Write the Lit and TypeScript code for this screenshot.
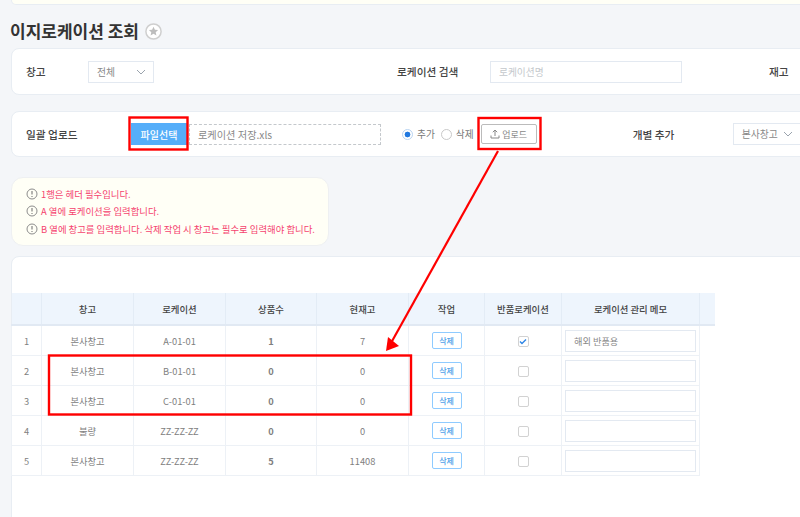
import { LitElement, html, css, svg } from 'lit';
import { customElement } from 'lit/decorators.js';

const rows = [
  { no: 1, wh: '본사창고', loc: 'A-01-01', count: 1, stock: 7, ret: true, memo: '해외 반품용' },
  { no: 2, wh: '본사창고', loc: 'B-01-01', count: 0, stock: 0, ret: false, memo: '' },
  { no: 3, wh: '본사창고', loc: 'C-01-01', count: 0, stock: 0, ret: false, memo: '' },
  { no: 4, wh: '불량', loc: 'ZZ-ZZ-ZZ', count: 0, stock: 0, ret: false, memo: '' },
  { no: 5, wh: '본사창고', loc: 'ZZ-ZZ-ZZ', count: 5, stock: 11408, ret: false, memo: '' },
];

const notices = [
  '1행은 헤더 필수입니다.',
  'A 열에 로케이션을 입력합니다.',
  'B 열에 창고를 입력합니다. 삭제 작업 시 창고는 필수로 입력해야 합니다.',
];

const chevron = html`<svg class="chev" width="10" height="6" viewBox="0 0 10 6"><path d="M1 1l4 4 4-4" fill="none" stroke="#9aa3ad" stroke-width="1"/></svg>`;

const noticeIcon = html`<svg class="notice-icon" width="12" height="12" viewBox="0 0 12 12">
  <circle cx="6" cy="6" r="5" fill="none" stroke="#8c8c8c" stroke-width="1"/>
  <path d="M6 3v3.6M6 8v1.1" stroke="#777" stroke-width="1.1" fill="none"/>
</svg>`;

const overlay = svg`
  <rect x="129.5" y="117.5" width="58" height="32" fill="none" stroke="#f00" stroke-width="2.4"/>
  <rect x="478.5" y="118" width="62" height="31" fill="none" stroke="#f00" stroke-width="2.4"/>
  <rect x="49" y="355.5" width="362" height="59" fill="none" stroke="#f00" stroke-width="2.4"/>
  <path d="M498 151L391 343" fill="none" stroke="#f00" stroke-width="2.2"/>
  <polygon points="386,351 388,337 399,346" fill="#f00"/>
`;

@customElement('app-root')
export class AppRoot extends LitElement {
  static styles = css`
    :host {
      display: block;
      position: relative;
      width: 800px;
      height: 517px;
      overflow: hidden;
      background: #f4f6f9;
      font-family: 'Noto Sans CJK KR', 'Noto Sans', sans-serif;
      font-size: 10px;
      color: #444;
    }

    .page {
      display: flex;
      flex-direction: column;
      width: 830px;
      padding-left: 11px;
      box-sizing: border-box;
    }

    .top-card {
      height: 5px;
      background: #fffff6;
      border: 1px solid #e8edf3;
      border-top: 0;
      border-radius: 0 0 8px 8px;
      box-sizing: border-box;
    }

    .title {
      display: flex;
      align-items: center;
      gap: 6px;
      height: 44px;
      margin-top: -1px;
      padding-top: 9px;
      box-sizing: border-box;
      font-size: 17px;
      font-weight: 700;
      color: #333;
      line-height: 1;
      margin-left: -1px;
    }

    .star {
      margin-top: 2px;
    }

    .card {
      display: flex;
      align-items: center;
      background: #fff;
      border: 1px solid #e8edf3;
      border-radius: 8px;
      box-sizing: border-box;
      padding-left: 14px;
    }

    .filter {
      height: 47px;
    }

    .upload {
      height: 46px;
      margin-top: 16px;
    }

    .label {
      font-weight: 500;
      color: #444;
      font-size: 10.7px;
      white-space: nowrap;
    }

    .select {
      display: flex;
      align-items: center;
      justify-content: space-between;
      height: 22px;
      box-sizing: border-box;
      padding: 0 7px 0 8px;
      border: 1px solid #e3e9f1;
      color: #888;
      font-size: 9.8px;
      background: #fff;
    }

    .field {
      height: 22px;
      width: 192px;
      box-sizing: border-box;
      padding-left: 8px;
      border: 1px solid #e3e9f1;
      color: #c4c8cc;
      font-size: 9.7px;
      display: flex;
      align-items: center;
    }

    .pick {
      width: 56px;
      height: 22px;
      background: #55aef9;
      color: #fff;
      font-weight: 500;
      font-size: 10px;
      display: flex;
      align-items: center;
      justify-content: center;
    }

    .file {
      width: 192px;
      height: 21px;
      margin-left: 2px;
      box-sizing: border-box;
      padding-left: 8px;
      border: 1px dashed #c4c8cc;
      display: flex;
      align-items: center;
      color: #888;
      font-size: 10.2px;
    }

    .radio {
      display: flex;
      align-items: center;
      color: #777;
      font-size: 9.7px;
    }

    .radio i {
      display: block;
      width: 11px;
      height: 11px;
      box-sizing: border-box;
      border: 1px solid #c9c9c9;
      border-radius: 50%;
      margin-right: 4px;
      background: #fff;
    }

    .radio i.on {
      border-color: #b9d4f2;
      background: radial-gradient(circle, #1f78e0 0 2.6px, #fff 3.2px);
    }

    .up-btn {
      width: 56px;
      height: 20px;
      box-sizing: border-box;
      border: 1px solid #bbb;
      border-radius: 2px;
      display: flex;
      align-items: center;
      justify-content: center;
      gap: 2px;
      color: #888;
      font-size: 9px;
    }

    .notice {
      width: 318px;
      height: 69px;
      margin-top: 20px;
      box-sizing: border-box;
      background: #fffff6;
      border: 1px solid #eef0f2;
      border-radius: 12px;
      padding: 7px 0 0 14px;
      display: flex;
      flex-direction: column;
    }

    .notice div {
      display: flex;
      align-items: center;
      gap: 3px;
      height: 17.5px;
      color: #f5436f;
      font-size: 9.4px;
      white-space: nowrap;
    }

    .list-card {
      margin-top: 10px;
      height: 300px;
      background: #fff;
      border: 1px solid #e8edf3;
      border-radius: 8px 0 0 0;
      box-sizing: border-box;
      padding-top: 36px;
    }

    table {
      border-collapse: collapse;
      table-layout: fixed;
      width: 703px;
      margin-left: -1px;
    }

    th {
      height: 31px;
      padding: 0;
      background: #eef5fd;
      border-right: 1px solid #e3ecf6;
      border-bottom: 2px solid #e1e9f3;
      font-weight: 500;
      font-size: 9.4px;
      color: #444;
    }

    th:last-child {
      border-right: 0;
    }

    td {
      height: 29px;
      padding: 0;
      text-align: center;
      border-right: 1px solid #edf1f6;
      border-bottom: 1px solid #edf1f6;
      font-size: 9.3px;
      color: #808080;
    }

    td:first-child {
      border-left: 1px solid #edf1f6;
    }

    td.blank {
      border: 0;
    }

    td.num {
      font-weight: 700;
    }

    .del {
      display: inline-flex;
      align-items: center;
      justify-content: center;
      width: 30px;
      height: 17px;
      box-sizing: border-box;
      border: 1px solid #8fcbff;
      border-radius: 2px;
      color: #4f9fe8;
      font-size: 8px;
      font-weight: 500;
      vertical-align: middle;
    }

    .check {
      display: inline-flex;
      align-items: center;
      justify-content: center;
      width: 11px;
      height: 11px;
      box-sizing: border-box;
      border: 1px solid #d2d2d2;
      border-radius: 2px;
      background: #fff;
      vertical-align: middle;
    }

    .memo {
      display: flex;
      align-items: center;
      width: 131px;
      height: 22px;
      margin-left: 3px;
      box-sizing: border-box;
      padding-left: 8px;
      border: 1px solid #e3e9f1;
      color: #888;
      font-size: 9.2px;
      text-align: left;
    }

    .overlay {
      position: absolute;
      left: 0;
      top: 0;
      pointer-events: none;
    }
  `;

  render() {
    return html`
      <div class="page">
        <div class="top-card"></div>
        <div class="title">
          이지로케이션 조회
          <svg class="star" width="17" height="17" viewBox="0 0 17 17">
            <circle cx="8.5" cy="8.5" r="7.6" fill="#fff" stroke="#cfcfcf" stroke-width="1.5"/>
            <path d="M8.5 3.8l1.4 3 3.2.3-2.4 2.1.7 3.2-2.9-1.7-2.9 1.7.7-3.2-2.4-2.1 3.2-.3z" fill="#bdbdbd"/>
          </svg>
        </div>

        <div class="card filter">
          <span class="label" style="width:62px">창고</span>
          <div class="select" style="width:66px">전체 ${chevron}</div>
          <span class="label" style="margin-left:243px;width:93px">로케이션 검색</span>
          <div class="field">로케이션명</div>
          <span class="label" style="margin-left:87px">재고</span>
        </div>

        <div class="card upload">
          <span class="label" style="width:105px">일괄 업로드</span>
          <div class="pick">파일선택</div>
          <div class="file">로케이션 저장.xls</div>
          <div class="radio" style="margin-left:21px"><i class="on"></i>추가</div>
          <div class="radio" style="margin-left:6px"><i></i>삭제</div>
          <div class="up-btn" style="margin-left:7px">
            <svg width="10" height="10" viewBox="0 0 10 10">
              <path d="M5 7V1M2.8 3.2L5 1l2.2 2.2M1 6.5V9h8V6.5" fill="none" stroke="#888" stroke-width="1"/>
            </svg>
            업로드
          </div>
          <span class="label" style="margin-left:96px;width:100px">개별 추가</span>
          <div class="select" style="width:80px;justify-content:flex-start;gap:5px">본사창고 ${chevron}</div>
        </div>

        <div class="notice">
          ${notices.map((text) => html`<div>${noticeIcon}${text}</div>`)}
        </div>

        <div class="list-card">
          <table>
            <colgroup>
              <col style="width:30px" /><col style="width:92px" /><col style="width:92px" /><col style="width:91px" />
              <col style="width:92px" /><col style="width:76px" /><col style="width:77px" /><col style="width:138px" />
              <col style="width:15px" />
            </colgroup>
            <thead>
              <tr>
                <th></th><th>창고</th><th>로케이션</th><th>상품수</th><th>현재고</th><th>작업</th>
                <th>반품로케이션</th><th>로케이션 관리 메모</th><th></th>
              </tr>
            </thead>
            <tbody>
              ${rows.map(
                (row) => html`
                  <tr>
                    <td>${row.no}</td>
                    <td>${row.wh}</td>
                    <td>${row.loc}</td>
                    <td class="num">${row.count}</td>
                    <td>${row.stock}</td>
                    <td><span class="del">삭제</span></td>
                    <td>
                      <span class="check">
                        ${row.ret
                          ? html`<svg width="8" height="7" viewBox="0 0 8 7"><path d="M1 3.5l2 2 4-4" fill="none" stroke="#2f86e6" stroke-width="1.4"/></svg>`
                          : ''}
                      </span>
                    </td>
                    <td><div class="memo">${row.memo}</div></td>
                    <td class="blank"></td>
                  </tr>
                `,
              )}
            </tbody>
          </table>
        </div>
      </div>
      <svg class="overlay" width="800" height="517" viewBox="0 0 800 517">${overlay}</svg>
    `;
  }
}
